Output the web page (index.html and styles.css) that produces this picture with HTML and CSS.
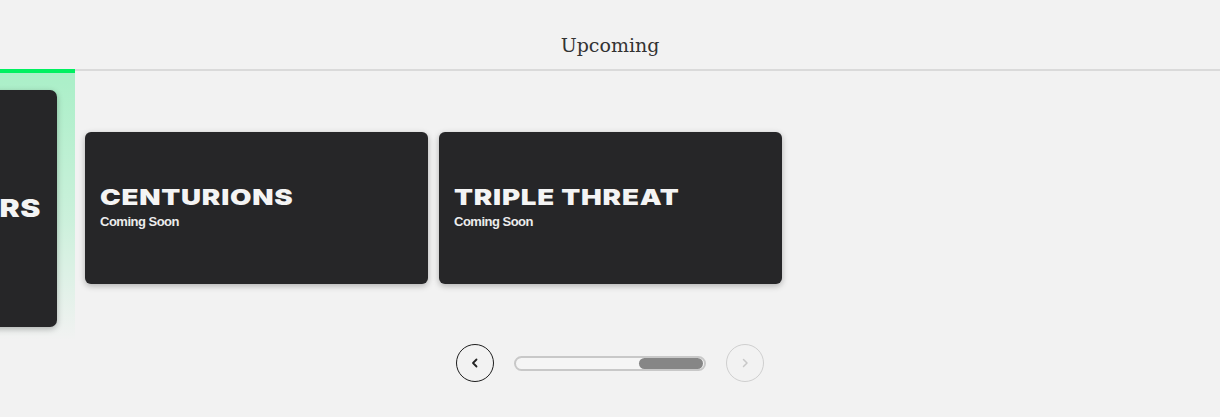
FILE: index.html
```html
<!DOCTYPE html>
<html>
<head>
<meta charset="utf-8">
<link rel="stylesheet" href="styles.css">
</head>
<body>
<div class="page">
  <header class="header">
    <h1 class="title">Upcoming</h1>
  </header>
  <section class="carousel">
    <div class="glow"><div class="glow-bar"></div></div>
    <div class="track">
      <div class="card card-active">
        <div class="card-title-wrap"><span class="card-title big">GLADIATORS</span></div>
      </div>
      <div class="card">
        <div class="card-text">
          <span class="card-title">CENTURIONS</span>
          <span class="card-sub">Coming Soon</span>
        </div>
      </div>
      <div class="card">
        <div class="card-text">
          <span class="card-title">TRIPLE THREAT</span>
          <span class="card-sub">Coming Soon</span>
        </div>
      </div>
    </div>
    <div class="pager">
      <button class="nav nav-prev" aria-label="Previous">
        <svg width="12" height="12" viewBox="0 0 12 12"><path d="M7.5 2.5 L4 6 L7.5 9.5" fill="none" stroke="#222" stroke-width="1.8" stroke-linecap="round" stroke-linejoin="round"/></svg>
      </button>
      <div class="scrollbar"><div class="thumb"></div></div>
      <button class="nav nav-next" aria-label="Next">
        <svg width="12" height="12" viewBox="0 0 12 12"><path d="M4.5 2.5 L8 6 L4.5 9.5" fill="none" stroke="#c8c8c8" stroke-width="1.5" stroke-linecap="round" stroke-linejoin="round"/></svg>
      </button>
    </div>
  </section>
</div>
</body>
</html>
```
FILE: styles.css
```css
html, body {
  margin: 0;
  padding: 0;
  background: #f2f2f2;
  overflow: hidden;
}
.page {
  width: 1220px;
  height: 417px;
  overflow: hidden;
}
.header {
  height: 69px;
  border-bottom: 2px solid #dadada;
  display: flex;
  justify-content: center;
  align-items: flex-start;
}
.title {
  margin: 33px 0 0 0;
  font-family: "DejaVu Serif", "Liberation Serif", serif;
  font-weight: normal;
  font-size: 19px;
  line-height: 24px;
  color: #333;
}
.carousel {
  position: relative;
}
.glow {
  position: absolute;
  left: 0;
  top: -2px;
  width: 75px;
  height: 272px;
  background: linear-gradient(to bottom, rgba(0, 232, 100, 0.30) 0%, rgba(0, 232, 100, 0.16) 55%, rgba(0, 232, 100, 0) 100%);
}
.glow-bar {
  height: 4px;
  background: #00f060;
}
.track {
  display: flex;
  align-items: center;
  gap: 11px;
  padding-top: 19px;
  height: 237px;
}
.card {
  position: relative;
  flex: 0 0 auto;
  width: 343px;
  height: 152px;
  margin-top: -1px;
  background: #262628;
  border-radius: 6px;
  box-shadow: 0 2px 6px rgba(0, 0, 0, 0.28);
  display: flex;
  align-items: center;
  box-sizing: border-box;
  padding: 0 15px;
}
.card-active {
  width: 480px;
  height: 237px;
  margin-top: 0;
  margin-left: -423px;
  margin-right: 17px;
  justify-content: flex-end;
  padding-right: 16px;
  border-radius: 7px;
}
.card-text {
  display: flex;
  flex-direction: column;
  margin-top: -2px;
}
.card-title {
  display: inline-block;
  font-family: Inter, "DejaVu Sans", sans-serif;
  font-weight: 900;
  font-size: 22px;
  line-height: 26px;
  color: #f4f4f4;
  letter-spacing: 0.6px;
  transform: scaleX(1.26);
  transform-origin: left center;
  white-space: nowrap;
}
.card-title-wrap {
  display: flex;
  justify-content: flex-end;
}
.card-title.big {
  font-size: 24px;
  transform-origin: right center;
  letter-spacing: 0.6px;
}
.card-sub {
  font-family: "Liberation Sans", Arial, sans-serif;
  font-weight: bold;
  font-size: 13px;
  line-height: 16px;
  color: #ececec;
  letter-spacing: -0.5px;
  margin-top: 4px;
}
.pager {
  display: flex;
  justify-content: center;
  align-items: center;
  gap: 20px;
  margin-top: 17px;
}
.nav {
  width: 38px;
  height: 38px;
  border-radius: 50%;
  background: transparent;
  display: flex;
  align-items: center;
  justify-content: center;
  padding: 0;
  box-sizing: border-box;
}
.nav-prev {
  border: 1.6px solid #1e1e1e;
}
.nav-next {
  border: 1.6px solid #cfcfcf;
}
.scrollbar {
  width: 192px;
  height: 15px;
  box-sizing: border-box;
  border: 2px solid #c8c8c8;
  border-radius: 8px;
  background: #f5f5f5;
  display: flex;
  justify-content: flex-end;
  align-items: center;
  padding: 0 1px;
}
.thumb {
  width: 64px;
  height: 11px;
  border-radius: 6px;
  background: #868686;
}
```
